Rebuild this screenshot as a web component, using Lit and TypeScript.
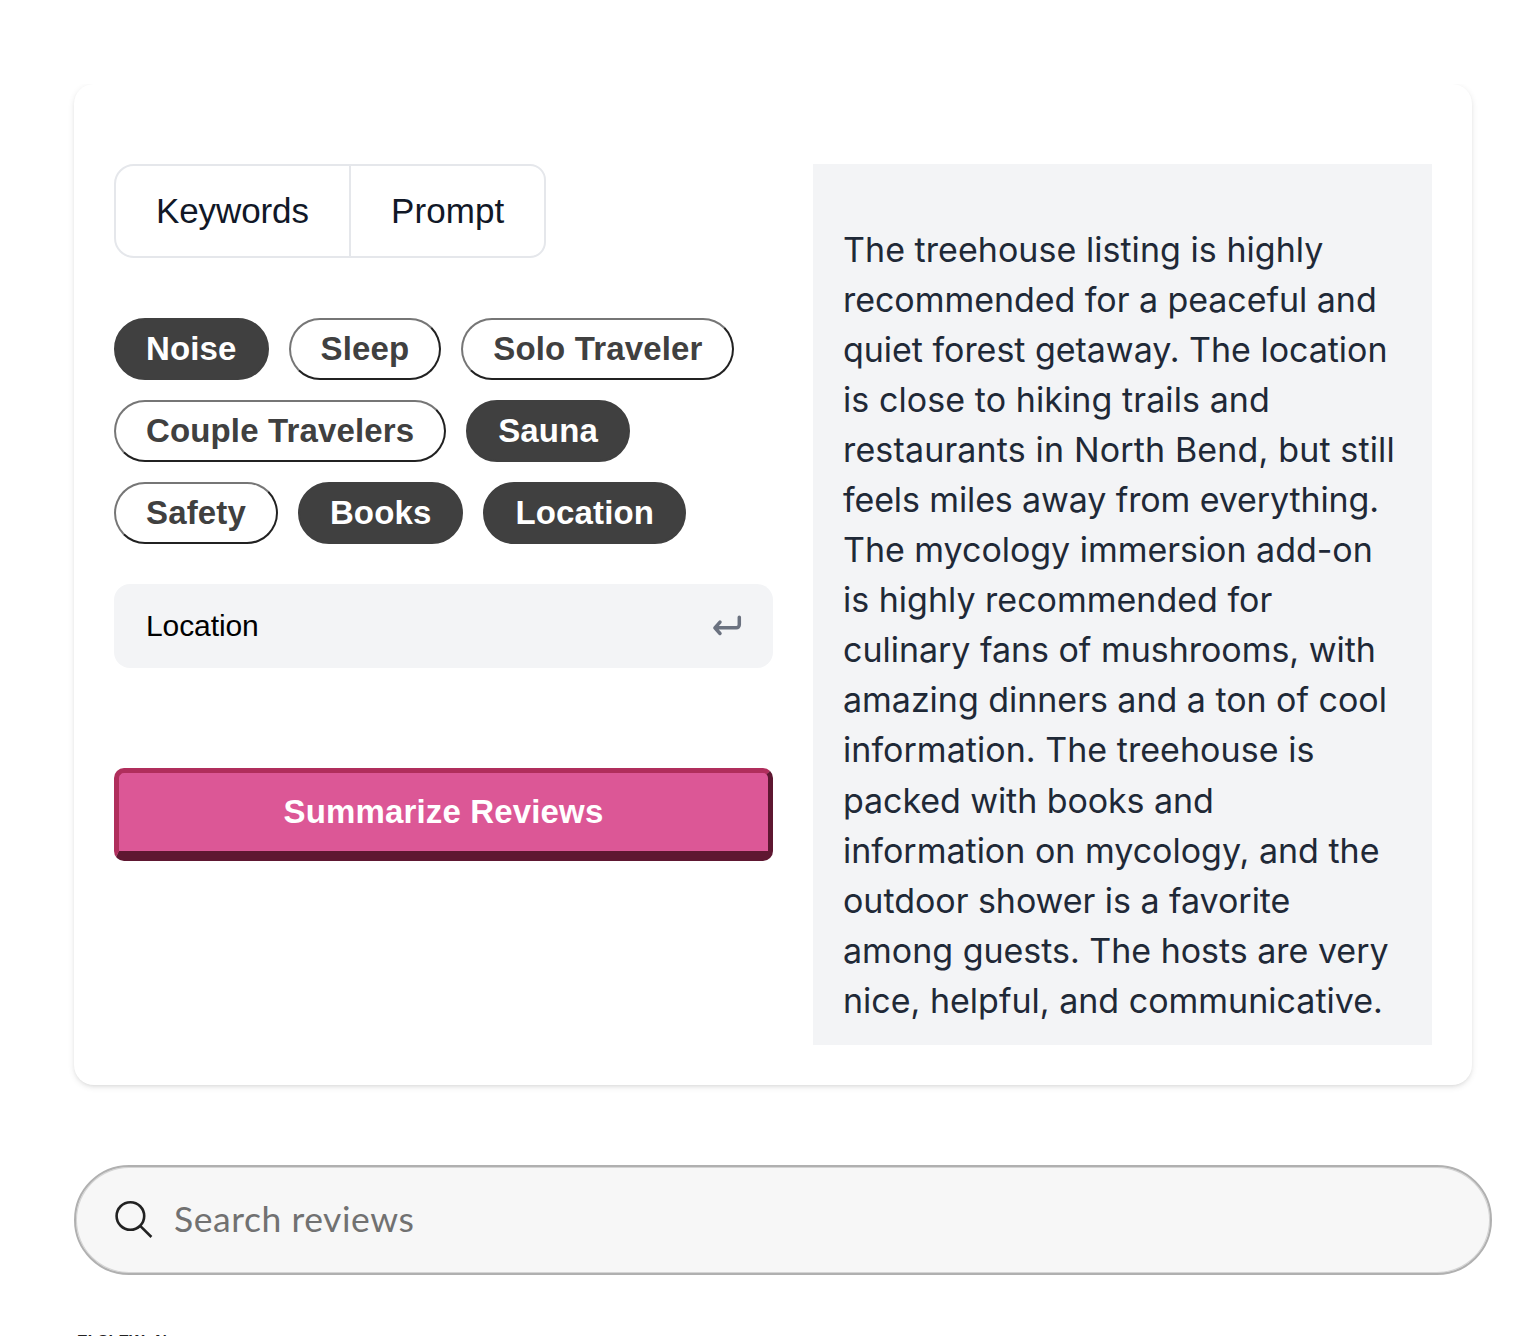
import { LitElement, html, css } from "lit";
import { customElement, property } from "lit/decorators.js";
import { classMap } from "lit/directives/class-map.js";
import { styleMap } from "lit/directives/style-map.js";

interface Keyword {
  label: string;
  selected: boolean;
}

interface SummaryLine {
  text: string;
  tracking: number;
}

const KEYWORDS: Keyword[] = [
  { label: "Noise", selected: true },
  { label: "Sleep", selected: false },
  { label: "Solo Traveler", selected: false },
  { label: "Couple Travelers", selected: false },
  { label: "Sauna", selected: true },
  { label: "Safety", selected: false },
  { label: "Books", selected: true },
  { label: "Location", selected: true },
];

const SUMMARY: SummaryLine[] = [
  { text: "The treehouse listing is highly", tracking: 0.04 },
  { text: "recommended for a peaceful and", tracking: -0.05 },
  { text: "quiet forest getaway. The location", tracking: -0.03 },
  { text: "is close to hiking trails and", tracking: 0.08 },
  { text: "restaurants in North Bend, but still", tracking: 0.15 },
  { text: "feels miles away from everything.", tracking: -0.12 },
  { text: "The mycology immersion add-on", tracking: -0.03 },
  { text: "is highly recommended for", tracking: 0 },
  { text: "culinary fans of mushrooms, with", tracking: -0.03 },
  { text: "amazing dinners and a ton of cool", tracking: -0.03 },
  { text: "information. The treehouse is", tracking: 0.04 },
  { text: "packed with books and", tracking: -0.08 },
  { text: "information on mycology, and the", tracking: 0 },
  { text: "outdoor shower is a favorite", tracking: -0.04 },
  { text: "among guests. The hosts are very", tracking: -0.02 },
  { text: "nice, helpful, and communicative.", tracking: 0 },
];

@customElement("keyword-chip")
export class KeywordChip extends LitElement {
  @property() label = "";
  @property({ type: Boolean }) selected = false;

  static styles = css`
    :host {
      display: block;
    }
    .chip {
      display: block;
      box-sizing: border-box;
      height: 62px;
      margin: 0;
      padding: 0 30px;
      border: 2px solid;
      border-color: #767676 #212121 #212121 #767676;
      border-radius: 31px;
      background: #fff;
      color: #404040;
      font: bold 33px/58px "Liberation Sans", Arial, sans-serif;
      letter-spacing: 0.14px;
      white-space: nowrap;
    }
    .selected {
      border-color: #404040;
      background: #404040;
      color: #fff;
    }
  `;

  render() {
    return html`<button class=${classMap({ chip: true, selected: this.selected })}>${this.label}</button>`;
  }
}

@customElement("app-root")
export class AppRoot extends LitElement {
  static styles = css`
    :host {
      display: block;
      box-sizing: border-box;
      height: 1336px;
      padding: 84px 38px 0 74px;
      overflow: hidden;
      background: #fff;
      font-family: "Liberation Sans", Arial, sans-serif;
    }
    .card {
      display: grid;
      grid-template-columns: 659px 619px;
      column-gap: 40px;
      box-sizing: border-box;
      width: 1398px;
      height: 1001px;
      padding: 80px 40px 40px;
      border-radius: 20px;
      background: #fff;
      box-shadow: 0 2px 6px rgba(0, 0, 0, 0.1), 0 2px 4px -2px rgba(0, 0, 0, 0.1);
      clip-path: inset(0 -20px -20px -20px);
    }
    .controls {
      display: flex;
      flex-direction: column;
      align-items: stretch;
    }
    .tabs {
      display: flex;
      align-self: flex-start;
      box-sizing: border-box;
      width: 432px;
      height: 94px;
      border: 2px solid #e5e7eb;
      border-radius: 20px 16px 16px 20px;
    }
    .tab {
      padding-left: 40px;
      color: #111827;
      font-size: 35px;
      line-height: 90px;
    }
    .tab:first-child {
      width: 193px;
      letter-spacing: -0.1px;
    }
    .tab + .tab {
      flex: 1;
      border-left: 2px solid #e5e7eb;
      letter-spacing: 0.1px;
    }
    .chips {
      display: flex;
      flex-wrap: wrap;
      gap: 20px;
      margin-top: 60px;
    }
    .entry {
      display: flex;
      align-items: center;
      justify-content: space-between;
      box-sizing: border-box;
      height: 84px;
      margin-top: 40px;
      padding: 0 30px 0 32px;
      border-radius: 16px;
      background: #f3f4f6;
      color: #000;
      font-size: 30px;
      letter-spacing: -0.1px;
    }
    .submit {
      box-sizing: border-box;
      height: 93px;
      margin: 100px 0 0;
      padding: 0;
      border-style: solid;
      border-width: 5px 5px 10px;
      border-color: #b02e5c #5e1731 #5e1731 #b02e5c;
      border-radius: 10px;
      background: #dc5796;
      color: #fff;
      font: bold 33px/78px "Liberation Sans", Arial, sans-serif;
      letter-spacing: 0.15px;
    }
    .summary {
      box-sizing: border-box;
      padding: 61px 0 0 30px;
      background: #f3f4f6;
      color: #1f2937;
      font: 34px/50.047px Inter, sans-serif;
      white-space: nowrap;
    }
    .summary p {
      margin: 0;
    }
    .line {
      display: block;
    }
    .search {
      display: flex;
      align-items: center;
      box-sizing: border-box;
      width: 1418px;
      height: 110px;
      margin-top: 80px;
      padding: 0 0 3px 37px;
      border: 2px solid #b0b0b0;
      border-radius: 55px;
      background: #f7f7f7;
      box-shadow: inset 0 0 0 1px #d4d4d4;
      color: #717171;
      font: 35.5px Lato, sans-serif;
      letter-spacing: 0.55px;
    }
    .lens {
      width: 42px;
      height: 42px;
      margin: 3px 19px 0 0;
    }
    .reviewer {
      margin: 56px 0 0 3px;
      color: #222;
      font-size: 16px;
      font-weight: bold;
      line-height: 22px;
      letter-spacing: 0.15px;
      word-spacing: 6px;
    }
  `;

  render() {
    return html`
      <section class="card">
        <div class="controls">
          <div class="tabs">
            <div class="tab">Keywords</div>
            <div class="tab">Prompt</div>
          </div>
          <div class="chips">
            ${KEYWORDS.map(
              (k) => html`<keyword-chip .label=${k.label} .selected=${k.selected}></keyword-chip>`
            )}
          </div>
          <div class="entry">
            <span>Location</span>
            <svg width="32" height="28" viewBox="0 0 32 28" fill="none" stroke="#6b7280"
              stroke-width="3.5" stroke-linecap="round" stroke-linejoin="round">
              <path d="M28.3 5.2v7.6a3 3 0 0 1-3 3H4.4M9 10.1L3.9 15.8L9 21.5" />
            </svg>
          </div>
          <button class="submit">Summarize Reviews</button>
        </div>
        <div class="summary">
          <p>
            ${SUMMARY.map(
              (l) => html`<span class="line" style=${styleMap({ letterSpacing: `${l.tracking}px` })}>${l.text}</span>`
            )}
          </p>
        </div>
      </section>
      <div class="search">
        <svg class="lens" viewBox="0 0 42 42" fill="none" stroke="#222" stroke-width="2.6">
          <circle cx="17.4" cy="17" r="13.8" />
          <path d="M27.2 26.8L38.4 38" />
        </svg>
        <span>Search reviews</span>
      </div>
      <div class="reviewer">ELSLEW N</div>
    `;
  }
}
